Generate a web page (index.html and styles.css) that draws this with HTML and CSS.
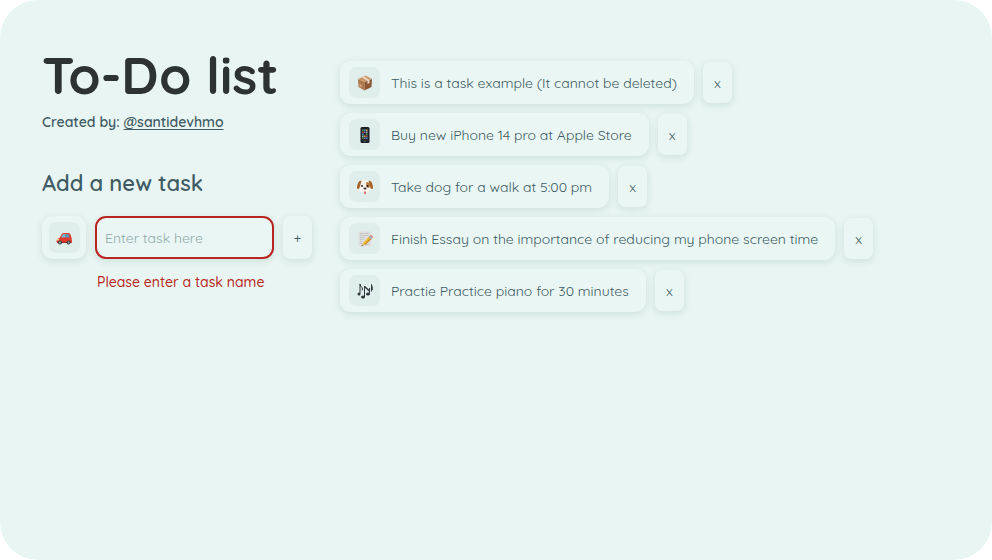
FILE: index.html
```html
<!DOCTYPE html>
<html lang="en">
    <head>
        <meta charset="UTF-8">
        <meta name="viewport" content="width=device-width, initial-scale=1.0">
        <title>To-Do list</title>
        <link rel="stylesheet" href="styles.css">
    </head>
    <body>
        <main class="app">
            <section class="sidebar">
                <h1>To-Do list</h1>
                <p class="author">Created by: <a href="#">@santidevhmo</a></p>
                <h2>Add a new task</h2>
                <form class="new-task" novalidate>
                    <button type="button" class="emoji-button" aria-label="Choose emoji">
                        <span class="emoji">
                            <svg viewBox="0 0 32 32">
                                <path d="M1 22q0-5 6-6l4-7q1-3 4-3h10q3 0 4 3l2 6 1 8q0 3-3 3H4q-3 0-3-4z" fill="#e23b2e"/>
                                <path d="M10 15l3-5q1-2 2-2h4v7z" fill="#6cb8d8"/>
                                <path d="M20 8h4q2 0 3 7h-7z" fill="#4f9cbd"/>
                                <path d="M2 18h4v3H2z" fill="#f6d27b"/>
                                <path d="M1 24h30v2H3z" fill="#a82720"/>
                                <circle cx="8" cy="25" r="4" fill="#30373b"/>
                                <circle cx="8" cy="25" r="2" fill="#a7b1b5"/>
                                <circle cx="25" cy="25" r="4" fill="#30373b"/>
                                <circle cx="25" cy="25" r="2" fill="#a7b1b5"/>
                            </svg>
                        </span>
                    </button>
                    <input type="text" id="task-name" placeholder="Enter task here" aria-label="Task name" aria-describedby="task-error">
                    <button type="submit" class="small-button add" aria-label="Add task">+</button>
                </form>
                <p class="error" id="task-error">Please enter a task name</p>
            </section>
            <ul class="tasks">
                <li>
                    <div class="task">
                        <span class="emoji">
                            <svg viewBox="0 0 32 32">
                                <path d="M2 8l13 6v17L3 24z" fill="#ad7748"/>
                                <path d="M15 14l15-6-1 16-14 7z" fill="#8b5734"/>
                                <path d="M2 8l15-7 13 7-15 6z" fill="#c99664"/>
                                <path d="M9 4l4-2 12 8v6l-4 2v-6z" fill="#ead8c2"/>
                                <path d="M5 18l4 2v5l-4-2z" fill="#d3b08b"/>
                            </svg>
                        </span>
                        <span>This is a task example (It cannot be deleted)</span>
                    </div>
                    <button type="button" class="small-button" aria-label="Delete task">x</button>
                </li>
                <li>
                    <div class="task">
                        <span class="emoji">
                            <svg viewBox="0 0 32 32">
                                <rect x="7" y="0" width="18" height="32" rx="3" fill="#17191c"/>
                                <rect x="9" y="3" width="14" height="25" fill="#252b34"/>
                                <path d="M10 5h3v3h-3zM18 13h3v3h-3zM10 21h3v3h-3z" fill="#49a35b"/>
                                <path d="M14 5h3v3h-3zM10 13h3v3h-3zM18 21h3v3h-3z" fill="#4b91c7"/>
                                <path d="M18 5h3v3h-3zM14 17h3v3h-3z" fill="#d29c45"/>
                                <path d="M10 9h3v3h-3zM18 17h3v3h-3z" fill="#bd5045"/>
                                <path d="M14 9h3v3h-3zM14 21h3v3h-3z" fill="#8267a5"/>
                                <path d="M18 9h3v3h-3zM10 17h3v3h-3z" fill="#a6adb3"/>
                                <path d="M13 29h6v1h-6z" fill="#858b90"/>
                            </svg>
                        </span>
                        <span>Buy new iPhone 14 pro at Apple Store</span>
                    </div>
                    <button type="button" class="small-button" aria-label="Delete task">x</button>
                </li>
                <li>
                    <div class="task">
                        <span class="emoji">
                            <svg viewBox="0 0 32 32">
                                <path d="M5 8Q9 2 16 2t11 6l1 12q-2 7-12 7T4 20z" fill="#faf6ed"/>
                                <path d="M9 4Q4 2 1 11q-2 6 0 9 4 1 5-5zM23 4q5-2 8 7 2 6 0 9-4 1-5-5z" fill="#a96529"/>
                                <path d="M19 6q7 0 7 7 0 5-4 5-5-1-3-12z" fill="#b87935"/>
                                <circle cx="10" cy="14" r="2" fill="#292321"/>
                                <circle cx="21" cy="14" r="2" fill="#292321"/>
                                <ellipse cx="16" cy="19" rx="3" ry="2" fill="#302725"/>
                                <path d="M14 25h4v4q-2 3-4 0z" fill="#f2647c"/>
                            </svg>
                        </span>
                        <span>Take dog for a walk at 5:00 pm</span>
                    </div>
                    <button type="button" class="small-button" aria-label="Delete task">x</button>
                </li>
                <li>
                    <div class="task">
                        <span class="emoji">
                            <svg viewBox="0 0 32 32">
                                <path d="M3 1h25v30H3z" fill="#dedfdd"/>
                                <path d="M6 5h7M15 5h8M6 9h4M12 9h11M6 13h10M6 17h7M6 21h5M6 25h5M17 27h7" stroke="#c0c4c4" stroke-width="2"/>
                                <path d="M12 24L25 10l5 5-14 13-6 1z" fill="#efba35"/>
                                <path d="M14 27L28 13l2 2-14 13z" fill="#c9861f"/>
                                <path d="M23 12l3-3 5 5-3 3z" fill="#a8b1b5"/>
                                <path d="M26 9q3-2 5 1t0 4z" fill="#e27b7f"/>
                                <path d="M12 24l-3 6 7-2z" fill="#e4c295"/>
                                <path d="M10 28l-1 3 3-2z" fill="#343736"/>
                            </svg>
                        </span>
                        <span>Finish Essay on the importance of reducing my phone screen time</span>
                    </div>
                    <button type="button" class="small-button" aria-label="Delete task">x</button>
                </li>
                <li>
                    <div class="task">
                        <span class="emoji">
                            <svg viewBox="0 0 32 32">
                                <g fill="none" stroke="#30373a" stroke-width="2">
                                    <path d="M6 21V2q1 5 4 7 2 3 0 6M15 28V6M25 21V10M29 17V3q0 3 2 6 1 3-1 5"/>
                                    <path d="M15 7l10 9" stroke-width="3"/>
                                </g>
                                <g fill="#30373a">
                                    <ellipse cx="4" cy="22" rx="3" ry="3"/>
                                    <ellipse cx="12" cy="28" rx="4" ry="3"/>
                                    <ellipse cx="22" cy="22" rx="4" ry="3"/>
                                </g>
                            </svg>
                        </span>
                        <span>Practie Practice piano for 30 minutes</span>
                    </div>
                    <button type="button" class="small-button" aria-label="Delete task">x</button>
                </li>
            </ul>
        </main>
        <script>
        document.querySelector('.new-task').addEventListener('submit', function (ev) {
            ev.preventDefault();
        });
        </script>
    </body>
</html>
```
FILE: styles.css
```css
* {
    box-sizing: border-box;
}
body {
    margin: 0;
    background-color: #fff;
    color: #405b64;
    font-family: Quicksand, Lato, sans-serif;
    font-size: 14px;
}
.app {
    display: flex;
    align-items: flex-start;
    gap: 28px;
    min-height: 100vh;
    padding: 40px 42px;
    border-radius: 38px;
    background-color: #e8f5f2;
}
.sidebar {
    flex: none;
}
h1, h2, p {
    margin: 0;
}
h1 {
    margin-bottom: 2px;
    color: #2d3333;
    font-size: 52px;
    line-height: 70px;
}
.author {
    font-size: 14px;
    font-weight: 600;
    line-height: 20px;
}
.author a {
    color: inherit;
    text-decoration-thickness: 1px;
    text-underline-offset: 2px;
}
h2 {
    margin-top: 36px;
    font-size: 22px;
    font-weight: 600;
    line-height: 30px;
}
.new-task {
    display: flex;
    gap: 9px;
    margin-top: 18px;
}
button, input {
    font: inherit;
    color: inherit;
    background-color: #e9f6f3;
    border: none;
    box-shadow: 0 2px 7px rgba(50, 100, 95, 0.14);
}
button {
    padding: 0;
    cursor: pointer;
}
.emoji-button {
    display: flex;
    align-items: center;
    justify-content: center;
    width: 44px;
    height: 43px;
    border-radius: 11px;
}
.emoji {
    display: flex;
    flex: none;
    align-items: center;
    justify-content: center;
    width: 31px;
    height: 31px;
    border-radius: 7px;
    background-color: #dfeeeb;
}
.emoji svg {
    width: 16px;
    height: 16px;
}
.new-task input {
    width: 179px;
    height: 43px;
    padding: 0 8px;
    border: 2px solid #b92520;
    border-radius: 11px;
    outline: none;
}
.new-task input::placeholder {
    color: #94aaaa;
    opacity: 1;
}
.small-button {
    flex: none;
    width: 29px;
    height: 41px;
    border-radius: 7px;
}
.small-button.add {
    height: 43px;
}
.error {
    margin: 13px 0 0 55px;
    color: #b92520;
    font-weight: 500;
    line-height: 20px;
}
.tasks {
    display: flex;
    flex-direction: column;
    gap: 9px;
    margin: 21px 0 0;
    padding: 0;
    list-style: none;
}
.tasks li {
    display: flex;
    align-items: center;
    gap: 9px;
}
.task {
    display: flex;
    align-items: center;
    gap: 11px;
    height: 43px;
    padding: 0 17px 0 9px;
    border-radius: 11px;
    background-color: #e9f6f3;
    box-shadow: 0 2px 7px rgba(50, 100, 95, 0.14);
}
```
